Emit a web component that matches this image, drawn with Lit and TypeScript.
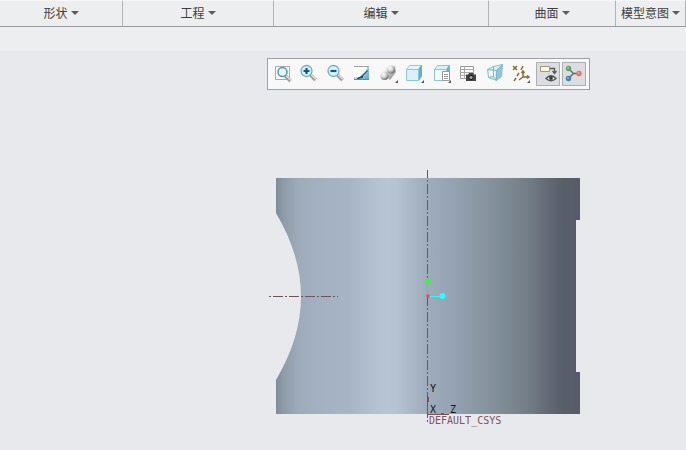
import { LitElement, html, svg, css } from "lit";
import { customElement } from "lit/decorators.js";
import { classMap } from "lit/directives/class-map.js";

const more = svg`<path d="M21 18V21h-3z" fill="#555"/>`;
const handle = svg`
  <path d="M13.500 13l5 5" stroke="#9a9a9a" stroke-width="3.600"/>
  <path d="M14.200 12.700l4.500 4.500" stroke="#e2dfdb" stroke-width="1.500"/>`;

const tools = [
  {
    name: "重新调整", pressed: false,
    icon: svg`<path d="M4.500 4.500h14v13h-14z" fill="#fafafa" stroke="#ababab"/>
      <g transform="translate(1 1)">${handle}</g>
      <circle cx="11.500" cy="10" r="4.500" fill="#e4f5fb" stroke="#5796b0" stroke-width="1.500"/>`,
  },
  {
    name: "放大", pressed: false,
    icon: svg`${handle}<circle cx="9.500" cy="9" r="5.500" fill="#dcf1f8" stroke="#72aac0" stroke-width="1.300"/>
      <path d="M9.500 6v6M6.500 9h6" stroke="#0b5c80" stroke-width="2.200"/>`,
  },
  {
    name: "缩小", pressed: false,
    icon: svg`${handle}<circle cx="9.500" cy="9" r="5.500" fill="#dcf1f8" stroke="#72aac0" stroke-width="1.300"/>
      <path d="M6.500 9h6" stroke="#0b5c80" stroke-width="2.200"/>`,
  },
  {
    name: "重画", pressed: false,
    icon: svg`<defs><linearGradient id="paint" x1="0" y1="0" x2="1" y2="1">
        <stop offset="0" stop-color="#e4f4f9"/><stop offset="1" stop-color="#58a9c8"/></linearGradient></defs>
      <path d="M4 4h15v14H4z" fill="url(#paint)"/>
      <path d="M4 5h13c0 4-2 7-6 9-2 1-4 2-7 1z" fill="#fff"/>
      <path d="M4 4.500h15" stroke="#a3a3a3"/><path d="M4 17.500h15" stroke="#5694ab"/>
      <path d="M17.500 8.500l-6 6" stroke="#2b6480" stroke-width="1.500"/>
      <path d="M12.500 14l-5 2.500 5-1z" fill="#164b66" stroke="#164b66"/>`,
  },
  {
    name: "渲染选项", pressed: false,
    icon: svg`<defs>
        <radialGradient id="ball" cx=".35" cy=".3" r=".8">
          <stop offset="0" stop-color="#fff"/><stop offset=".45" stop-color="#d4d4d4"/><stop offset="1" stop-color="#5a5a5a"/></radialGradient>
        <linearGradient id="rod" x1="0" y1="0" x2="1" y2="1">
          <stop offset=".2" stop-color="#f6f6f6"/><stop offset="1" stop-color="#777"/></linearGradient></defs>
      <path d="M10 5l8-1 1 6-6 8-8-7z" fill="url(#rod)"/>
      <circle cx="14" cy="7.500" r="4" fill="url(#ball)"/>
      <circle cx="7.500" cy="14" r="4" fill="url(#ball)"/>${more}`,
  },
  {
    name: "显示样式", pressed: false,
    icon: svg`<path d="M3.500 7.500l3-4h12l-3 4z" fill="#e2f5fb" stroke="#93cbdd"/>
      <path d="M15.500 7.500l3-4v11l-3 4z" fill="#5cb2d0" stroke="#6bb0c9"/>
      <path d="M3.500 7.500h12v11h-12z" fill="#daf1f9" stroke="#8cc6d9"/>${more}`,
  },
  {
    name: "已保存方向", pressed: false,
    icon: svg`<path d="M4.500 7.500l3-4h12l-3 4z" fill="#daf1f8" stroke="#8bc6d8"/>
      <path d="M16.500 7.500l3-4v8h-3z" fill="#62b4d0" stroke="#72b5cc"/>
      <path d="M4.500 7.500h12v11h-12z" fill="#f1f9fc" stroke="#8ec5d7"/>
      <path d="M12.500 9.500h7v9h-7z" fill="#fff" stroke="#999"/>
      <path d="M14 12.500h4M14 14.500h4M14 16.500h4" stroke="#999"/>${more}`,
  },
  {
    name: "视图管理器", pressed: false,
    icon: svg`<path d="M4.500 4.500h13v12h-13z" fill="#fff" stroke="#999"/>
      <path d="M4 7.500h14M4 10.500h14M4 13.500h14M8.500 4v13" stroke="#aaa"/>
      <path d="M10 12.500h2l1-1.500h4l1 1.500h2V19H10z" fill="#444"/>
      <circle cx="15" cy="15.500" r="2.200" fill="#999" stroke="#151515"/>`,
  },
  {
    name: "透视图", pressed: false,
    icon: svg`<path d="M4.500 7.500l6-3 9-2-1 12-5 4-8-3z" fill="#d5edf5" stroke="#8abfd1"/>
      <path d="M13.500 8.500l6-6-1 12-5 4z" fill="#8cc5d9"/>
      <path d="M6 9h6v5H6z" fill="#f2fafd"/>
      <path d="M4.500 7.500l9 1 6-6M13.500 8.500v10M10.500 4.500v10l-5 1M10.500 14.500l3 4" fill="none" stroke="#7fb7ca"/>`,
  },
  {
    name: "基准显示过滤器", pressed: false,
    icon: svg`<g fill="none" stroke="#8b6c34" stroke-width="1.500">
      <path d="M4 4l4 4M8 4l-4 4M14 4l-2 4M10 11l-2 3M7 16l-2 3"/>
      <path d="M14 9v6h6M14 15l-4 3M12.500 11L14 9l1.500 2M18 13.500l2 1.500-2 1.500"/></g>${more}`,
  },
  {
    name: "注释显示", pressed: true,
    icon: svg`<path d="M4.500 4.500h9v5h-9z" fill="#fff8df" stroke="#a2977e"/>
      <path d="M14 6.500h4.500V11M16.500 9l2 2.500 2-2.500" fill="none" stroke="#5a5a5a" stroke-width="1.300"/>
      <path d="M10 16.500q5-5.500 10 0-5 4.500-10 0z" fill="#f0f0f0" stroke="#505050" stroke-width="1.300"/>
      <circle cx="15" cy="16" r="1.900" fill="#3a3a3a"/>`,
  },
  {
    name: "旋转中心", pressed: true,
    icon: svg`<path d="M6.500 6.500l5 5 5.500 0M11.500 11.500l-5 5" fill="none" stroke="#666" stroke-width="1.400"/>
      <circle cx="6.500" cy="6.500" r="2.700" fill="#5ca567"/><circle cx="6" cy="6" r="1" fill="#a4d5a9"/>
      <circle cx="17" cy="11.500" r="2.700" fill="#dc7474"/><circle cx="16.500" cy="11" r="1" fill="#f0b0b0"/>
      <circle cx="6.500" cy="16.500" r="2.700" fill="#3a86ab"/><circle cx="6" cy="16" r="1" fill="#82bbd5"/>`,
  },
];

const groups = ["形状", "工程", "编辑", "曲面", "模型意图"];

// Shading across the cylinder: [x, colour]
const shades: [number, string][] = [
  [276, "#7f8d9b"], [284, "#8f9dab"], [300, "#9eacbb"], [325, "#a4b1c2"], [352, "#a8b5c7"],
  [370, "#b1bfcf"], [388, "#b8c5d5"], [398, "#b5c2d2"], [412, "#a9b7c7"], [427, "#9eacbc"],
  [450, "#96a3b4"], [470, "#8d9ba8"], [487, "#86939e"], [510, "#7c8790"], [533, "#6f7983"],
  [543, "#686e79"], [562, "#575f68"], [580, "#565d68"],
];

@customElement("app-root")
export class AppRoot extends LitElement {
  static styles = css`
    :host {
      display: flex;
      flex-direction: column;
      min-height: 100vh;
      background: #e8e9ed;
      font: 12px/16px "Noto Sans CJK SC", sans-serif;
      color: #3d3d3d;
    }
    .groups {
      display: grid;
      grid-template-columns: 123fr 151fr 215fr 127fr 70fr;
      height: 26px;
      background: #edeef0;
      border-bottom: 1px solid #9c9ca0;
    }
    .group {
      display: flex;
      align-items: center;
      justify-content: center;
      gap: 3px;
      min-width: 0;
      padding: 0 0 1px;
      border: 0;
      border-top: 1px solid #f7f8f9;
      border-right: 1px solid #b3b4b8;
      background: none;
      font: inherit;
      color: inherit;
      white-space: nowrap;
    }
    .caret {
      border: 4px solid transparent;
      border-top-color: #5c5c5c;
      border-bottom: 0;
    }
    .strip {
      height: 24px;
      background: #edeef0;
    }
    .view {
      flex: 1;
      display: grid;
      grid-template-columns: minmax(0, 1fr) 323px 96px;
      grid-template-rows: auto auto;
      align-content: start;
      row-gap: 76px;
      padding-top: 7px;
    }
    .tools {
      grid-column: 2;
      display: flex;
      justify-content: space-between;
      align-items: center;
      padding: 3px;
      border: 1px solid #a0a1a5;
      background: #f8f8f9;
    }
    .tool {
      display: grid;
      place-items: center;
      width: 24px;
      height: 24px;
      padding: 0;
      border: 0;
      background: none;
    }
    .pressed {
      background: #dcdde0;
      box-shadow: inset 0 0 0 1px #aeafb3;
    }
    .icon {
      display: block;
      width: 24px;
      height: 24px;
    }
    .model {
      grid-column: 2;
      display: block;
      width: 100%;
    }
    .tag {
      font: 10px "DejaVu Sans Mono", monospace;
      fill: #111;
    }
    .csys {
      fill: #80525a;
    }
  `;

  render() {
    return html`
      <nav class="groups">
        ${groups.map((g) => html`<button class="group">${g}<span class="caret"></span></button>`)}
      </nav>
      <div class="strip"></div>
      <main class="view">
        <div class="tools" role="toolbar">
          ${tools.map(
            (t) => html`<button class=${classMap({ tool: true, pressed: t.pressed })} aria-label=${t.name}>
              <svg class="icon" viewBox="0 0 24 24">${t.icon}</svg>
            </button>`
          )}
        </div>
        <svg class="model" viewBox="267 166 323 264">
          <defs>
            <linearGradient id="metal" gradientUnits="userSpaceOnUse" x1="276" y1="0" x2="580" y2="0">
              ${shades.map(([x, c]) => svg`<stop offset=${(x - 276) / 304} stop-color=${c} />`)}
            </linearGradient>
          </defs>
          <path d="M276 178H580V220H576V372H580V414H276V380C292 353 301 325 301 296C301 268 292 240 276 213Z" fill="url(#metal)" />
          <g stroke="#76505b" fill="none">
            <path d="M269 296.500H338" stroke-dasharray="2 2 10 2" />
            <path d="M427.500 170V423" stroke-dasharray="10 2 2 2" stroke-dashoffset="2" />
            <path d="M427.500 392V414M428.500 397v5M428 414.500H449M441 413.500h3" />
          </g>
          <path d="M427.500 282V296" stroke="#38ee38" />
          <circle cx="428" cy="281.500" r="2.700" fill="#2cff2c" />
          <path d="M428 296.500H442" stroke="#35f4f6" />
          <circle cx="442.500" cy="296" r="2.900" fill="#2cfcff" />
          <path d="M426.500 294.500h3v3h-3z" fill="#e94850" />
          <text class="tag" x="430" y="392">Y</text>
          <text class="tag" x="430" y="413">X</text>
          <text class="tag" x="450" y="413">Z</text>
          <text class="tag csys" x="429" y="424">DEFAULT_CSYS</text>
        </svg>
      </main>
    `;
  }
}
